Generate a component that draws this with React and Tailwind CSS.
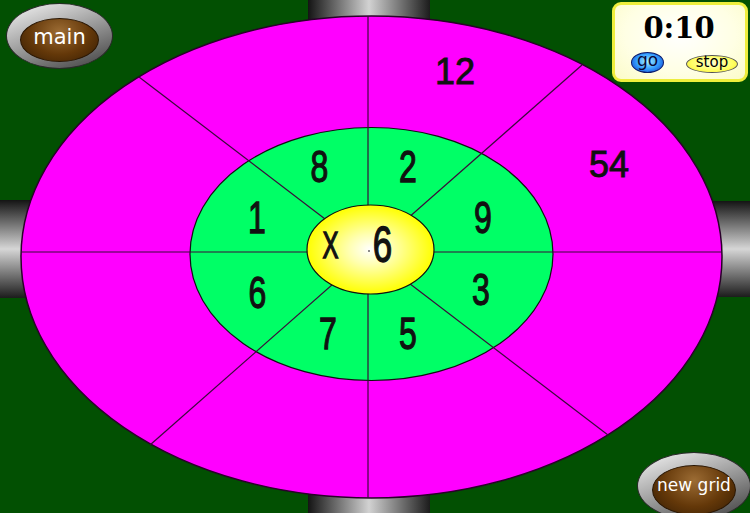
import React from "react";

const innerNumbers = [
  { t: "8", x: 319.5, y: 166 },
  { t: "2", x: 408, y: 166 },
  { t: "9", x: 483, y: 217 },
  { t: "3", x: 481, y: 289 },
  { t: "5", x: 408, y: 333 },
  { t: "7", x: 328, y: 333 },
  { t: "6", x: 257.5, y: 292 },
  { t: "1", x: 257, y: 217 },
];

const outerNumbers = [
  { t: "12", x: 455, y: 71 },
  { t: "54", x: 609, y: 164.5 },
];

const font = "'Liberation Sans', Arial, sans-serif";

function Board() {
  return (
    <svg width="750" height="513" viewBox="0 0 750 513" className="block">
      <defs>
        <linearGradient id="barH" x1="0" y1="0" x2="1" y2="0">
          <stop offset="0" stopColor="#141414" />
          <stop offset="0.5" stopColor="#d2d2d2" />
          <stop offset="1" stopColor="#1c1c1c" />
        </linearGradient>
        <linearGradient id="barV" x1="0" y1="0" x2="0" y2="1">
          <stop offset="0" stopColor="#141414" />
          <stop offset="0.5" stopColor="#d6d6d6" />
          <stop offset="1" stopColor="#1c1c1c" />
        </linearGradient>
        <radialGradient id="yolk" cx="0.5" cy="0.5" r="0.5">
          <stop offset="0" stopColor="#ffffff" />
          <stop offset="0.35" stopColor="#ffffb0" />
          <stop offset="1" stopColor="#ffff00" />
        </radialGradient>
      </defs>

      {/* side bars */}
      <rect x="308" y="0" width="122" height="30" fill="url(#barH)" />
      <rect x="308" y="484" width="122" height="29" fill="url(#barH)" />
      <rect x="0" y="200" width="40" height="98" fill="url(#barV)" />
      <rect x="713" y="201" width="37" height="96" fill="url(#barV)" />

      <ellipse cx="371.5" cy="257" rx="350.5" ry="241" fill="#ff00ff" stroke="#2a002a" strokeWidth="1.5" />
      <ellipse cx="371.5" cy="254" rx="181.5" ry="126.5" fill="#00ff66" stroke="#111" strokeWidth="1.2" />

      <g stroke="#3a0a3a" strokeWidth="1.2">
        <line x1="139" y1="77" x2="608" y2="435" />
        <line x1="582" y1="65" x2="150" y2="445" />
        <line x1="368" y1="16" x2="368" y2="498" />
        <line x1="21" y1="252" x2="722" y2="252" />
      </g>

      <ellipse cx="370.5" cy="249.5" rx="63.5" ry="44.5" fill="url(#yolk)" stroke="#111" strokeWidth="1.2" />
      <circle cx="369" cy="251" r="1" fill="#666" />

      <g fill="#111" stroke="#111" strokeWidth="0.9" fontFamily={font}>
        {outerNumbers.map((n) => (
          <text key={n.t} x={n.x} y={n.y + 12.9} textAnchor="middle" fontSize="36">
            {n.t}
          </text>
        ))}

        {innerNumbers.map((n) => (
          <g key={n.t} transform={`translate(${n.x} ${n.y}) scale(1 1.4)`}>
            <text x="0" y="11.5" textAnchor="middle" fontSize="32">
              {n.t}
            </text>
          </g>
        ))}

        <g transform="translate(330.5 245) scale(1 1.55)">
          <text x="0" y="8.6" textAnchor="middle" fontSize="24">
            X
          </text>
        </g>
        <g transform="translate(382.5 244) scale(1 1.45)">
          <text x="0" y="12.5" textAnchor="middle" fontSize="35">
            6
          </text>
        </g>
      </g>
    </svg>
  );
}

function PillButton({ label, className, textClass }) {
  return (
    <button
      className={`absolute flex rounded-[50%] border border-[#2a2a2a] bg-[linear-gradient(160deg,#f6f6f6,#a4a4a4_45%,#3c3c3c)] ${className}`}
    >
      <span className="flex items-center justify-center w-full h-full rounded-[50%] border border-[#2b1703] bg-[radial-gradient(ellipse_at_50%_30%,#9c6c34,#643809_55%,#341c03)] text-white">
        <span className={`font-['DejaVu_Sans',sans-serif] leading-none ${textClass}`}>{label}</span>
      </span>
    </button>
  );
}

export default function App() {
  return (
    <div className="relative w-[750px] h-[513px] overflow-hidden bg-[#025002]">
      <Board />

      <PillButton
        label="main"
        className="left-[6px] top-[3px] w-[107px] h-[66px] pt-[14px] pb-[6px] px-[13px]"
        textClass="text-[21px] -mt-[6px]"
      />

      <PillButton
        label="new grid"
        className="left-[637px] top-[452px] w-[114px] h-[68px] pt-[12px] pb-[4px] px-[14px]"
        textClass="text-[17px] -mt-[10px]"
      />

      <div className="absolute left-[612px] top-[2px] w-[136px] h-[80px] rounded-[9px] border-[3px] border-[#eeee3c] bg-[radial-gradient(ellipse_at_50%_40%,#ffffff,#ffffe4_60%,#fbfbc8)] flex flex-col">
        <div className="text-center font-['DejaVu_Serif',serif] font-bold text-[29px] leading-none text-black mt-[9px] -ml-[2px]">
          0:10
        </div>
        <div className="flex items-end pl-[16px] mt-[9px] gap-[22px]">
          <button className="w-[33px] h-[21px] rounded-[50%] border border-[#0a1a6a] bg-[radial-gradient(ellipse_at_50%_45%,#a8f0ff,#36a0ff_50%,#0b2cc0)] flex items-center justify-center">
            <span className="font-['DejaVu_Sans',sans-serif] text-[17px] leading-none text-[#0a0a3a] -mt-[4px]">go</span>
          </button>
          <button className="w-[52px] h-[18px] rounded-[50%] border border-[#555] bg-[radial-gradient(ellipse_at_50%_45%,#ffffd0,#ffff60_60%,#f2e020)] flex items-center justify-center">
            <span className="font-['DejaVu_Sans',sans-serif] text-[15px] leading-none text-black -mt-[3px]">stop</span>
          </button>
        </div>
      </div>
    </div>
  );
}
